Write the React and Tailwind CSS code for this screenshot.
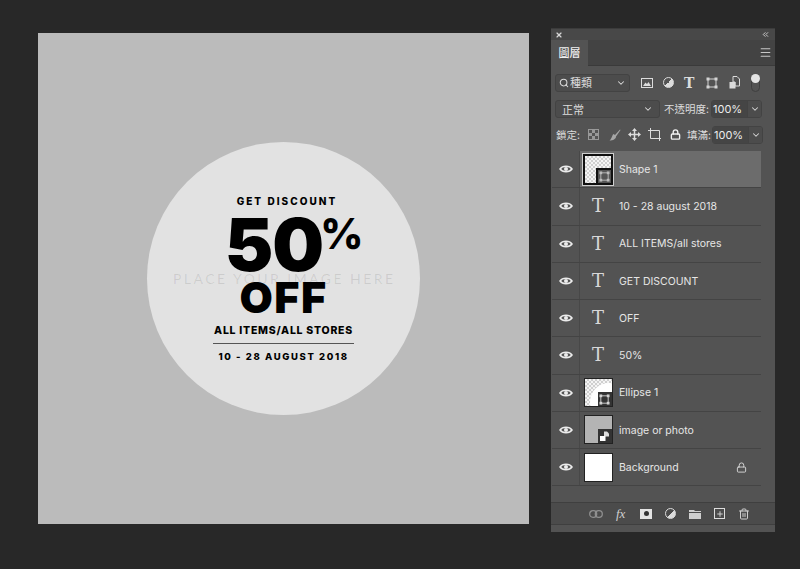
import React from 'react';
import { Search, ChevronDown, Lock, Trash2, Plus, Menu, X, ChevronsLeft } from 'lucide-react';

const checker = {
  backgroundImage: 'conic-gradient(#cfcfcf 25%, #f4f4f4 0 50%, #cfcfcf 0 75%, #f4f4f4 0)',
  backgroundSize: '4px 4px',
};

const EyeIcon = () => (
  <svg width="14" height="10" viewBox="0 0 14 10" fill="none">
    <path d="M1 5C3.5 1.4 10.500 1.400 13 5C10.500 8.600 3.500 8.600 1 5Z" stroke="#ececec" strokeWidth="1.500" />
    <circle cx="7" cy="5" r="2" fill="#ececec" />
  </svg>
);

const ShapeGlyph = ({ size = 12, color = '#d4d4d4' }) => (
  <svg width={size} height={size} viewBox="0 0 12 12" fill="none">
    <rect x="2" y="2" width="8" height="8" stroke={color} />
    <rect x="0.500" y="0.500" width="3" height="3" fill={color} />
    <rect x="8.500" y="0.500" width="3" height="3" fill={color} />
    <rect x="0.500" y="8.500" width="3" height="3" fill={color} />
    <rect x="8.500" y="8.500" width="3" height="3" fill={color} />
  </svg>
);

const Thumb = ({ kind }) => {
  if (kind === 'text') {
    return <span className="text-[18px] leading-none text-[#d8d8d8] font-['DejaVu_Serif',serif]">T</span>;
  }
  if (kind === 'shape') {
    return (
      <div className="relative w-[30px] h-[31px] border-2 border-[#111] outline outline-1 outline-[#cfcfcf]" style={checker}>
        <span className="absolute right-0 bottom-0 w-[15px] h-[15px] flex items-center justify-center bg-[#555] border-l-2 border-t-2 border-[#111]">
          <ShapeGlyph size={11} color="#bdbdbd" />
        </span>
      </div>
    );
  }
  if (kind === 'ellipse') {
    return (
      <div className="relative w-[29px] h-[29px] border border-[#222] overflow-hidden" style={checker}>
        <span className="absolute left-[5px] top-[4px] w-[38px] h-[38px] rounded-full bg-white" />
        <span className="absolute right-0 bottom-0 w-[14px] h-[14px] flex items-center justify-center bg-[#333]">
          <ShapeGlyph size={11} />
        </span>
      </div>
    );
  }
  if (kind === 'photo') {
    return (
      <div className="relative w-[29px] h-[29px] border border-[#222] bg-[#b4b4b4]">
        <span className="absolute right-0 bottom-0 w-[14px] h-[14px] bg-[#333] flex items-center justify-center">
          <svg width="11" height="11" viewBox="0 0 11 11">
            <path d="M5 0.500H8L10 2.500V5.500H5Z" fill="#dcdcdc" />
            <rect x="1" y="5" width="5.500" height="5" fill="#fff" />
          </svg>
        </span>
      </div>
    );
  }
  return <div className="w-[29px] h-[29px] border border-[#222] bg-white" />;
};

const layers = [
  { name: 'Shape 1', kind: 'shape', selected: true },
  { name: '10 - 28 august 2018', kind: 'text' },
  { name: 'ALL ITEMS/all stores', kind: 'text' },
  { name: 'GET DISCOUNT', kind: 'text' },
  { name: 'OFF', kind: 'text' },
  { name: '50%', kind: 'text' },
  { name: 'Ellipse 1', kind: 'ellipse' },
  { name: 'image or photo', kind: 'photo' },
  { name: 'Background', kind: 'bg', locked: true },
];

const LayerRow = ({ layer }) => (
  <div className="flex items-center h-[37.25px] border-b border-[#444] bg-[#535353]">
    <div className="w-[28px] h-full flex items-center justify-center border-r border-[#484848] shrink-0">
      <EyeIcon />
    </div>
    <div className={`flex-1 h-full flex items-center ${layer.selected ? 'bg-[#6c6c6c]' : ''}`}>
      <div className="ml-[2px] w-[32px] flex justify-center shrink-0">
        <Thumb kind={layer.kind} />
      </div>
      <span className="ml-[5px] mt-[1px] text-[10.5px] text-[#e6e6e6] flex-1 font-['Inter',sans-serif]">{layer.name}</span>
      {layer.locked && <Lock size={11} strokeWidth={2} className="mr-[14px] text-[#dadada]" />}
    </div>
  </div>
);

const Field = ({ children, className }) => (
  <div className={`h-[18px] flex items-center border border-[#434343] rounded-[3px] bg-[#4c4c4c] ${className}`}>{children}</div>
);

const PercentBox = () => (
  <div className="flex h-[18px] border border-[#434343] rounded-[3px] overflow-hidden">
    <span className="w-[35px] bg-[#454545] text-[11px] leading-[16px] pl-[1px] text-[#ececec] font-['Inter',sans-serif]">100%</span>
    <span className="w-[14px] flex items-center justify-center bg-[#4c4c4c] border-l border-[#434343]">
      <ChevronDown size={10} strokeWidth={2.5} className="text-[#d8d8d8]" />
    </span>
  </div>
);

const Panel = () => (
  <div className="w-[224px] h-[504px] bg-[#535353] border-t border-[#3b3b3b] flex flex-col font-['Noto_Sans_CJK_TC',sans-serif] text-[#dcdcdc]">
    <div className="h-[11px] flex items-center justify-between px-[4px] bg-[#484848]">
      <X size={8} strokeWidth={3.5} className="text-[#d8d8d8]" />
      <ChevronsLeft size={9} strokeWidth={2.5} className="text-[#d0d0d0] mr-[1px]" />
    </div>
    <div className="h-[26px] flex bg-[#434343] border-b border-[#3a3a3a]">
      <div className="w-[37px] h-[26px] bg-[#535353] text-[11px] leading-[25px] text-center text-[#f0f0f0] font-medium">圖層</div>
      <Menu size={13} className="ml-auto mr-[3px] mt-[6px] text-[#c8c8c8]" />
    </div>
    <div className="h-[33px] flex items-center pl-[4px]">
      <Field className="w-[75px] px-[3px]">
        <Search size={10} strokeWidth={2.5} />
        <span className="ml-[1px] text-[11px] flex-1">種類</span>
        <ChevronDown size={10} strokeWidth={2.5} />
      </Field>
      {/* filter kinds */}
      <div className="ml-[11px] flex items-center gap-[10px]">
        <svg width="12" height="10" viewBox="0 0 12 10">
          <rect x="0.500" y="0.500" width="11" height="9" fill="none" stroke="#dcdcdc" />
          <path d="M2 8L4.500 4.500L6 6L7.500 4L10 8Z" fill="#dcdcdc" />
        </svg>
        <span className="w-[11px] h-[11px] rounded-full border border-[#dcdcdc] bg-[linear-gradient(135deg,#535353_50%,#dcdcdc_50%)]" />
        <span className="w-[12px] text-[14px] leading-none font-bold font-['DejaVu_Serif',serif]">T</span>
        <ShapeGlyph />
        <svg width="11" height="13" viewBox="0 0 11 13" className="ml-[1px]">
          <path d="M4 .5H8L10.500 3V10H6V6H4Z" fill="none" stroke="#dcdcdc" />
          <rect x="0.500" y="6" width="6" height="6.500" fill="#dcdcdc" />
        </svg>
        <span className="relative ml-[1px] w-[9px] h-[16px] mt-[3px] rounded-full border border-[#3f3f3f]">
          <span className="absolute -left-[1px] -top-[3px] w-[9px] h-[9px] rounded-full bg-[#e4e4e4]" />
        </span>
      </div>
    </div>
    <div className="h-[20px] flex items-center pl-[4px]">
      <Field className="w-[105px] px-[6px] justify-between">
        <span className="text-[11px]">正常</span>
        <ChevronDown size={10} strokeWidth={2.5} />
      </Field>
      <span className="ml-[4px] w-[46px] text-[10.5px] whitespace-nowrap">不透明度:</span>
      <div className="ml-[1px]"><PercentBox /></div>
    </div>
    <div className="h-[31px] flex items-center pl-[5px]">
      <span className="w-[26px] text-[10.5px] whitespace-nowrap">鎖定:</span>
      <span className="ml-[6px] w-[11px] h-[11px] border border-[#999]" style={{ backgroundImage: 'conic-gradient(#999 25%, #555 0 50%, #999 0 75%, #555 0)', backgroundSize: '6px 6px' }} />
      <svg width="12" height="12" viewBox="0 0 12 12" className="ml-[10px]">
        <path d="M11 .5L6 6L4.500 5C3 6 3 9.500 .5 11.500C4 11.500 7 10 7 7.500L11.500 1Z" fill="#a6a6a6" />
      </svg>
      <svg width="13" height="13" viewBox="0 0 13 13" className="ml-[7px]">
        <path d="M6.500 0L9 3H7.250V5.750H10V4L13 6.500L10 9V7.250H7.250V10H9L6.500 13L4 10H5.750V7.250H3V9L0 6.500L3 4V5.750H5.750V3H4Z" fill="#dcdcdc" />
      </svg>
      <svg width="14" height="13" viewBox="0 0 14 13" fill="none" stroke="#dcdcdc" className="ml-[7px]">
        <path d="M2.500 0V10.500H13M0 2.500H11.500V13" />
      </svg>
      <Lock size={11} strokeWidth={3} className="ml-[8px] text-[#f0f0f0]" />
      <span className="ml-[6px] w-[26px] text-[10.5px] whitespace-nowrap">填滿:</span>
      <div className="ml-[-1px]"><PercentBox /></div>
    </div>
    <div className="pr-[14px] pl-[1px] pt-[1px] flex flex-col">
      {layers.map((l) => <LayerRow key={l.name} layer={l} />)}
    </div>
    <div className="mt-[16px] h-[23px] bg-[#4b4b4b] border-y border-[#3f3f3f] flex items-center pl-[38px] text-[#cfcfcf] shrink-0">
      <svg width="14" height="8" viewBox="0 0 14 8" fill="none" stroke="#8f8f8f" strokeWidth="1.300">
        <rect x="0.700" y="0.700" width="7" height="6.600" rx="3.300" />
        <rect x="6.300" y="0.700" width="7" height="6.600" rx="3.300" />
      </svg>
      <span className="ml-[13px] w-[13px] text-[13px] leading-none italic font-['Liberation_Serif',serif]">fx</span>
      <span className="ml-[11px] w-[12px] h-[10px] bg-[#e4e4e4] flex items-center justify-center">
        <span className="w-[5px] h-[5px] rounded-full bg-[#333]" />
      </span>
      <span className="ml-[13px] w-[11px] h-[11px] rounded-full border border-[#dcdcdc] bg-[linear-gradient(135deg,#4b4b4b_50%,#dcdcdc_50%)]" />
      <svg width="12" height="10" viewBox="0 0 12 10" className="ml-[13px]">
        <path d="M0 1H5L6 2H12V3H0Z M0 4H12V10H0Z" fill="#cfcfcf" />
      </svg>
      <span className="ml-[13px] w-[11px] h-[11px] border border-[#dcdcdc] flex items-center justify-center"><Plus size={8} strokeWidth={3} /></span>
      <Trash2 size={12} className="ml-[13px]" />
    </div>
  </div>
);

const Canvas = () => (
  <div className="w-[491px] h-[491px] bg-[#bbbbbb] flex items-center justify-center shrink-0">
    <div className="relative w-[273px] h-[273px] rounded-full bg-[#e2e2e2] flex flex-col items-center pt-[53px] text-black font-['Inter',sans-serif]">
      <span className="text-[10px] leading-[12px] font-extrabold tracking-[2.05px] ml-[7px]">GET DISCOUNT</span>
      <div className="relative mt-[7px] mr-[19px] h-[62px] text-[73px] leading-[62px] font-black tracking-[-1px]">
        50
        <span className="absolute left-full top-[-2px] ml-[-3px] text-[42px] leading-[44px] font-extrabold tracking-normal">%</span>
      </div>
      <span className="mt-[1px] text-[43px] leading-[40px] font-black tracking-[1.5px]">OFF</span>
      <span className="mt-[7px] text-[10.5px] leading-[13px] font-extrabold tracking-[0.75px]">ALL ITEMS/ALL STORES</span>
      <div className="mt-[6px] w-[141px] h-px bg-[#555]" />
      <span className="mt-[7px] text-[9.5px] leading-[12px] font-extrabold tracking-[1.6px]">10 - 28 AUGUST 2018</span>
      <span className="absolute left-[26px] top-[129px] whitespace-nowrap text-[14px] leading-[16px] tracking-[2.45px] text-[#00000018] font-normal font-['Lato',sans-serif]">PLACE YOUR IMAGE HERE</span>
    </div>
  </div>
);

export default function App() {
  return (
    <div className="w-[800px] h-[569px] overflow-hidden bg-[#282828] flex items-start pl-[38px] pt-[33px] gap-[22px]">
      <Canvas />
      <div className="-mt-[5px]">
        <Panel />
      </div>
    </div>
  );
}
